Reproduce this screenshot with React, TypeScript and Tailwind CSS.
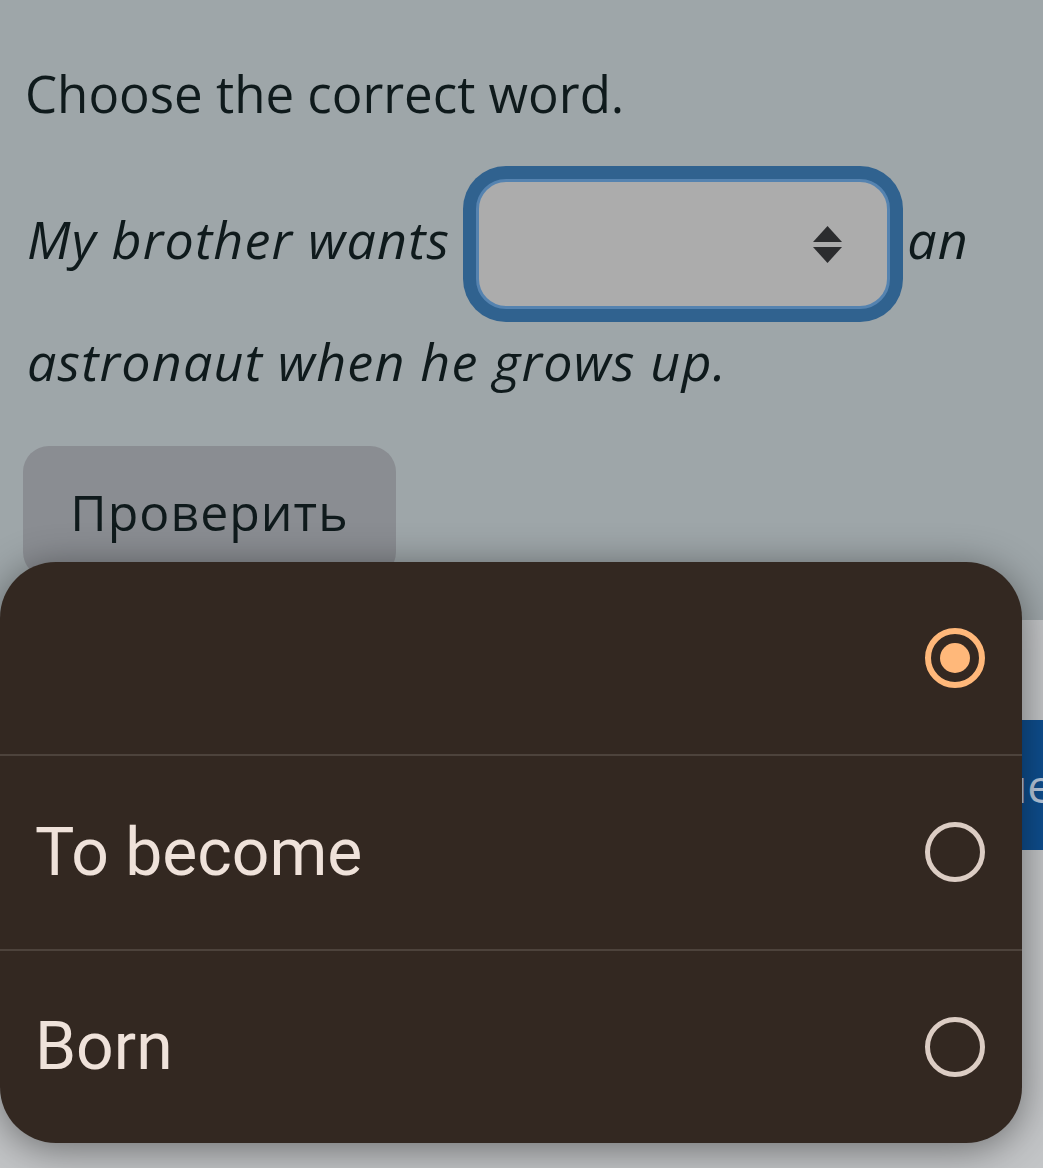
const body = "font-['Open_Sans','Noto_Sans',sans-serif]";

function Arrows() {
  return (
    <svg width="29" height="37" viewBox="0 0 29 37" className="shrink-0">
      <polygon points="14.5,0 29,16 0,16" fill="#2b2c2e" />
      <polygon points="0,21 29,21 14.5,37" fill="#2b2c2e" />
    </svg>
  );
}

function Radio({ checked }: { checked?: boolean }) {
  if (checked) {
    return (
      <span className="flex h-[60px] w-[60px] shrink-0 items-center justify-center rounded-full border-[6px] border-[#ffb87a]">
        <span className="h-[30px] w-[30px] rounded-full bg-[#ffb87a]" />
      </span>
    );
  }
  return <span className="h-[60px] w-[60px] shrink-0 rounded-full border-[5px] border-[#dccdc4]" />;
}

const options = [
  { label: "", checked: true },
  { label: "To become" },
  { label: "Born" },
];

export default function App() {
  return (
    <div className={`relative h-[1168px] w-[1043px] overflow-hidden bg-[#9ea6a9] ${body}`}>
      <div className="pt-[63px]">
        <h1 className="pl-[25px] text-[51px] leading-[60px] text-[#0f1a1c]">Choose the correct word.</h1>

        <div className="mt-[43px] flex h-[156px] items-center pl-[27px] text-[52px] italic leading-[60px] tracking-[1.2px] text-[#0f1a1c]">
          <span className="pb-[10px]">My brother wants</span>
          <span className="ml-[26px] flex h-[130px] w-[414px] shrink-0 items-center justify-end rounded-[30px] border-[3px] border-[#5583b0] bg-[#acacac] pr-[45px] shadow-[0_0_0_13px_#30628f]">
            <Arrows />
          </span>
          <span className="ml-[17px] pb-[10px]">an</span>
        </div>

        <p className="mt-[9px] pl-[27px] text-[52px] italic leading-[60px] tracking-[1.2px] text-[#0f1a1c]">
          astronaut when he grows up.
        </p>

        <div className="mt-[55px] pl-[23px]">
          <button className="flex h-[132px] w-[373px] items-center justify-center rounded-[26px] bg-[#8a8d92] text-[50px] tracking-[1px] text-[#0f1a1c]">
            Проверить
          </button>
        </div>

        <div className="mt-[42px] h-[600px] bg-[#c3c5c7] pt-[100px]">
          <div className="flex justify-end">
            <div className="flex h-[130px] w-[420px] items-center justify-end bg-[#0e4e8e] text-[46px] text-[#b9c9dd]">
              <span className="mr-[-36px]">Далее</span>
            </div>
          </div>
        </div>
      </div>

      <div className="absolute left-0 top-[562px] flex h-[581px] w-[1022px] flex-col overflow-hidden rounded-[56px] bg-[#332821] shadow-[0_6px_40px_rgba(0,0,0,0.45)] font-['Roboto',sans-serif]">
        {options.map((o, i) => (
          <div
            key={i}
            className={`flex flex-1 items-center justify-between pl-[35px] pr-[37px] ${i > 0 ? "border-t-2 border-[#4d433c]" : ""}`}
          >
            <span className="text-[66px] text-[#efe2da]">{o.label}</span>
            <Radio checked={o.checked} />
          </div>
        ))}
      </div>
    </div>
  );
}
